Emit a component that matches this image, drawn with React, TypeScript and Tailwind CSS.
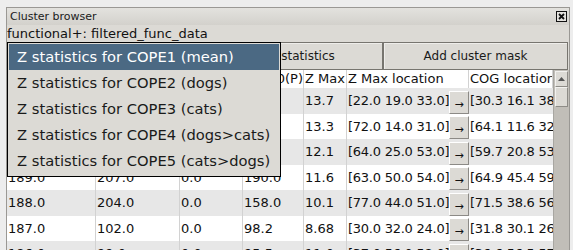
import React from "react";

type Row = { c: string[]; z: string; loc: string; cog: string };

const rows: Row[] = [
  { c: ["192.0", "349.0", "0.0", "301.0"], z: "13.7", loc: "[22.0 19.0 33.0]", cog: "[30.3 16.1 38.4]" },
  { c: ["191.0", "283.0", "0.0", "245.0"], z: "13.3", loc: "[72.0 14.0 31.0]", cog: "[64.1 11.6 32.7]" },
  { c: ["190.0", "230.0", "0.0", "199.0"], z: "12.1", loc: "[64.0 25.0 53.0]", cog: "[59.7 20.8 53.1]" },
  { c: ["189.0", "207.0", "0.0", "190.0"], z: "11.6", loc: "[63.0 50.0 54.0]", cog: "[64.9 45.4 59.2]" },
  { c: ["188.0", "204.0", "0.0", "158.0"], z: "10.1", loc: "[77.0 44.0 51.0]", cog: "[71.5 38.6 56.3]" },
  { c: ["187.0", "102.0", "0.0", "98.2"], z: "8.68", loc: "[30.0 32.0 24.0]", cog: "[31.8 30.1 26.0]" },
  { c: ["186.0", "99.0", "0.0", "95.5"], z: "11.0", loc: "[37.0 56.0 58.0]", cog: "[36.6 56.5 57.9]" },
];

const items = [
  "Z statistics for COPE1 (mean)",
  "Z statistics for COPE2 (dogs)",
  "Z statistics for COPE3 (cats)",
  "Z statistics for COPE4 (dogs>cats)",
  "Z statistics for COPE5 (cats>dogs)",
];

const headers = ["Cluster index", "Voxels", "P", "-log10(P)", "Z Max", "Z Max location", "COG location"];
const widths = ["w-[89px]", "w-[84px]", "w-[63px]", "w-[61px]", "w-[43px]", "w-[122px]", "w-[84px]"];

function CloseIcon() {
  return (
    <svg width="11" height="11" viewBox="0 0 11 11">
      <rect x="0.5" y="0.5" width="10" height="10" fill="#e4e3df" stroke="#111" />
      <path d="M3 3 L8 8 M8 3 L3 8" stroke="#111" strokeWidth="1.8" />
    </svg>
  );
}

function Btn({ w, label }: { w: string; label?: string }) {
  return (
    <div
      className={`${w} h-full shrink-0 border border-[#77756f] bg-[#dcdad5] shadow-[inset_1px_1px_0_#eeedea] flex items-center justify-center text-[12px] text-[#1a1a1a] whitespace-nowrap`}
    >
      {label}
    </div>
  );
}

export default function App() {
  return (
    <div className="relative w-[573px] h-[250px] overflow-hidden bg-[#ededed] pt-[7px] pl-[6px] pr-[3px] font-['DejaVu_Sans'] text-black">
      <div className="h-[243px] flex flex-col bg-[#dcdad5] border-l border-t border-r border-[#9a9894]">
        <div className="h-[17px] shrink-0 flex items-center justify-between bg-linear-to-b from-[#e3e2de] to-[#d3d1cc] pl-[3px] pr-[2px]">
          <span className="text-[11px] leading-none text-[#1a1a1a]">Cluster browser</span>
          <CloseIcon />
        </div>
        <div className="h-[17px] shrink-0 text-[13px] leading-[18px] whitespace-nowrap text-[#111]">
          functional+: filtered_func_data
        </div>
        <div className="h-[28px] shrink-0 flex">
          <Btn w="w-[187px]" />
          <Btn w="w-[189px]" label="Add Z statistics" />
          <Btn w="w-[185px]" label="Add cluster mask" />
        </div>
        <div className="flex-1 flex min-h-0">
          <div className="w-[546px] shrink-0 bg-white overflow-hidden text-[13px] text-[#111]">
            <div className="h-[18px] flex">
              {headers.map((h, i) => (
                <div
                  key={i}
                  className={`${widths[i]} shrink-0 h-full border-r border-[#d2d2d2] pl-[1px] leading-[18px] whitespace-nowrap overflow-hidden`}
                >
                  {h}
                </div>
              ))}
            </div>
            {rows.map((r, ri) => (
              <div
                key={ri}
                className={`flex ${ri % 2 === 0 ? "h-[26px] bg-[#e7e7e7]" : "h-[25px] bg-white"}`}
              >
                {r.c.map((v, ci) => (
                  <div
                    key={ci}
                    className={`${widths[ci]} shrink-0 h-full border-r border-[#d2d2d2] pl-[1px] flex items-center whitespace-nowrap overflow-hidden`}
                  >
                    {v}
                  </div>
                ))}
                <div className="w-[43px] shrink-0 h-full border-r border-[#d2d2d2] pl-[1px] flex items-center whitespace-nowrap overflow-hidden">
                  {r.z}
                </div>
                <div className="w-[122px] shrink-0 h-full pl-[1px] flex whitespace-nowrap">
                  <span className="flex-1 min-w-0 overflow-hidden self-center tracking-[-0.25px]">{r.loc}</span>
                  <div className="self-end w-[20px] h-[23px] shrink-0 bg-[#dcdad5] border-t border-l border-white border-r border-b border-r-[#8c8a86] border-b-[#8c8a86] flex items-center justify-center text-[11px] pt-[5px]">
                    →
                  </div>
                </div>
                <div className="w-[84px] shrink-0 h-full pl-[1px] flex items-center whitespace-nowrap overflow-hidden">
                  <span className="tracking-[-0.25px]">{r.cog}</span>
                </div>
              </div>
            ))}
          </div>
          <div className="w-[16px] shrink-0 flex flex-col bg-[#c1beb8] border-l border-[#a8a6a1] pt-[1px] px-[1px]">
            <div className="h-[16px] shrink-0 bg-[#dcdad5] border-t border-l border-[#f2f1ef] border-r border-b border-r-[#8e8c87] border-b-[#8e8c87] flex items-center justify-center">
              <svg width="7" height="4" viewBox="0 0 7 4">
                <path d="M0 4 L3.5 0 L7 4 Z" fill="#555" />
              </svg>
            </div>
            <div className="h-[20px] shrink-0 bg-[#dcdad5] border-t border-l border-[#f2f1ef] border-r border-b border-r-[#8e8c87] border-b-[#8e8c87]" />
          </div>
        </div>
      </div>
      <div className="absolute left-[7px] top-[42px] w-[274px] h-[135px] border border-black bg-[#dcdad5] pt-[1px] px-[1px]">
        {items.map((t, i) => (
          <div
            key={i}
            className={`h-[26px] pl-[8px] text-[14.7px] leading-[26px] whitespace-nowrap ${
              i === 0 ? "bg-[#4b6983] text-white" : "text-[#1a1a1a]"
            }`}
          >
            {t}
          </div>
        ))}
      </div>
    </div>
  );
}
